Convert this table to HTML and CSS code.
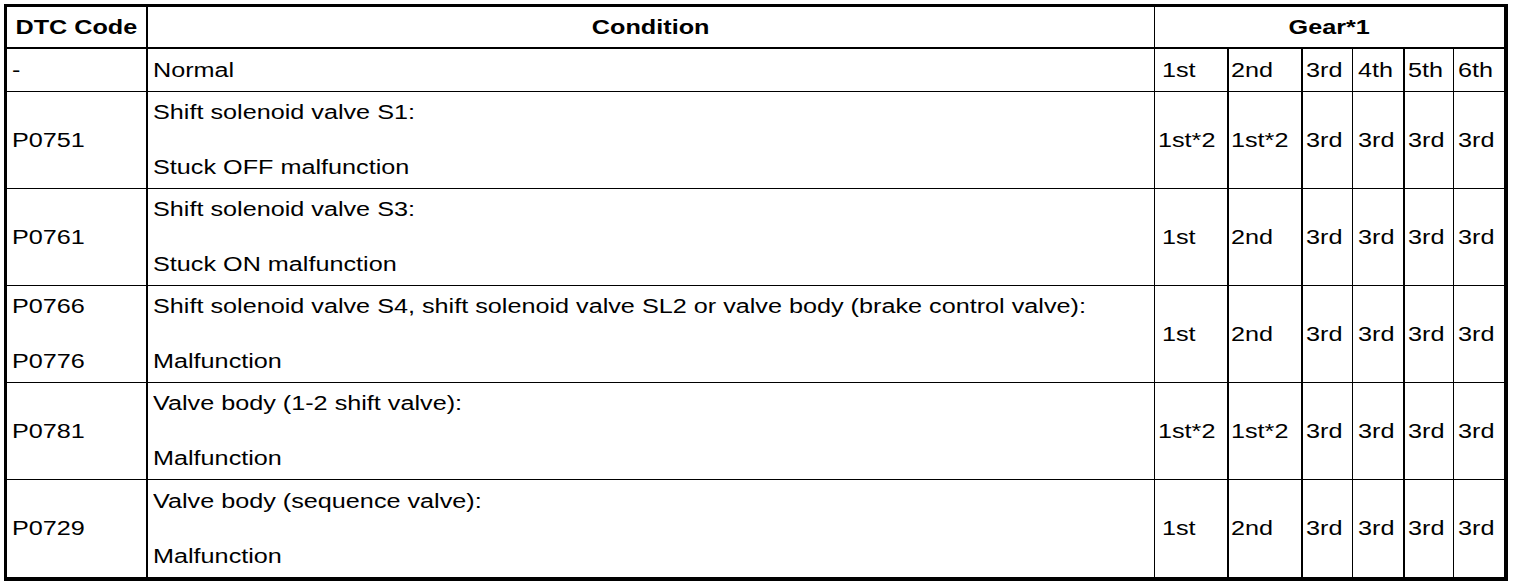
FILE: index.html
```html
<!DOCTYPE html>
<html>
<head>
<meta charset="utf-8">
<link rel="stylesheet" href="styles.css">
</head>
<body>
<table class="dtc">
  <colgroup>
    <col class="c-code">
    <col class="c-cond">
    <col class="c-g1">
    <col class="c-g2">
    <col class="c-g3">
    <col class="c-g4">
    <col class="c-g5">
    <col class="c-g6">
  </colgroup>
  <thead>
    <tr class="head">
      <th class="b2"><span class="t">DTC Code</span></th>
      <th class="b1"><span class="t">Condition</span></th>
      <th colspan="6" class="last"><span class="t">Gear*1</span></th>
    </tr>
  </thead>
  <tbody>
    <tr class="short">
      <td class="b2 code"><span class="t">-</span></td>
      <td class="b1 cond"><span class="t">Normal</span></td>
      <td class="b2 g1"><span class="t ind">1st</span></td>
      <td class="b2 g2"><span class="t">2nd</span></td>
      <td class="b1 g3"><span class="t">3rd</span></td>
      <td class="b2 g4"><span class="t">4th</span></td>
      <td class="b1 g5"><span class="t">5th</span></td>
      <td class="last g6"><span class="t">6th</span></td>
    </tr>
    <tr class="tall">
      <td class="b2 code"><span class="t">P0751</span></td>
      <td class="b1 cond"><div class="lines"><span class="t">Shift solenoid valve S1:</span><span class="t">Stuck OFF malfunction</span></div></td>
      <td class="b2 g1"><span class="t">1st*2</span></td>
      <td class="b2 g2"><span class="t">1st*2</span></td>
      <td class="b1 g3"><span class="t">3rd</span></td>
      <td class="b2 g4"><span class="t">3rd</span></td>
      <td class="b1 g5"><span class="t">3rd</span></td>
      <td class="last g6"><span class="t">3rd</span></td>
    </tr>
    <tr class="tall">
      <td class="b2 code"><span class="t">P0761</span></td>
      <td class="b1 cond"><div class="lines"><span class="t">Shift solenoid valve S3:</span><span class="t">Stuck ON malfunction</span></div></td>
      <td class="b2 g1"><span class="t ind">1st</span></td>
      <td class="b2 g2"><span class="t">2nd</span></td>
      <td class="b1 g3"><span class="t">3rd</span></td>
      <td class="b2 g4"><span class="t">3rd</span></td>
      <td class="b1 g5"><span class="t">3rd</span></td>
      <td class="last g6"><span class="t">3rd</span></td>
    </tr>
    <tr class="tall">
      <td class="b2 code"><div class="lines"><span class="t">P0766</span><span class="t">P0776</span></div></td>
      <td class="b1 cond"><div class="lines"><span class="t">Shift solenoid valve S4, shift solenoid valve SL2 or valve body (brake control valve):</span><span class="t">Malfunction</span></div></td>
      <td class="b2 g1"><span class="t ind">1st</span></td>
      <td class="b2 g2"><span class="t">2nd</span></td>
      <td class="b1 g3"><span class="t">3rd</span></td>
      <td class="b2 g4"><span class="t">3rd</span></td>
      <td class="b1 g5"><span class="t">3rd</span></td>
      <td class="last g6"><span class="t">3rd</span></td>
    </tr>
    <tr class="tall">
      <td class="b2 code"><span class="t">P0781</span></td>
      <td class="b1 cond"><div class="lines"><span class="t">Valve body (1-2 shift valve):</span><span class="t">Malfunction</span></div></td>
      <td class="b2 g1"><span class="t">1st*2</span></td>
      <td class="b2 g2"><span class="t">1st*2</span></td>
      <td class="b1 g3"><span class="t">3rd</span></td>
      <td class="b2 g4"><span class="t">3rd</span></td>
      <td class="b1 g5"><span class="t">3rd</span></td>
      <td class="last g6"><span class="t">3rd</span></td>
    </tr>
    <tr class="tall final">
      <td class="b2 code"><span class="t">P0729</span></td>
      <td class="b1 cond"><div class="lines"><span class="t">Valve body (sequence valve):</span><span class="t">Malfunction</span></div></td>
      <td class="b2 g1"><span class="t ind">1st</span></td>
      <td class="b2 g2"><span class="t">2nd</span></td>
      <td class="b1 g3"><span class="t">3rd</span></td>
      <td class="b2 g4"><span class="t">3rd</span></td>
      <td class="b1 g5"><span class="t">3rd</span></td>
      <td class="last g6"><span class="t">3rd</span></td>
    </tr>
  </tbody>
</table>
</body>
</html>
```

FILE: styles.css
```css
html, body {
  margin: 0;
  padding: 0;
  background: #ffffff;
}

body {
  padding: 4px 0 0 4px;
  font-family: "Liberation Sans", Arial, sans-serif;
  font-size: 20px;
  color: #000000;
}

.dtc {
  table-layout: fixed;
  border-collapse: separate;
  border-spacing: 0;
  width: 1504px;
  border-style: solid;
  border-color: #000;
  border-width: 3px 4px 4px 3px;
}

.c-code { width: 141px; }
.c-cond { width: 1007px; }
.c-g1 { width: 74px; }
.c-g2 { width: 74px; }
.c-g3 { width: 50px; }
.c-g4 { width: 52px; }
.c-g5 { width: 49px; }
.c-g6 { width: 50px; }

.dtc th,
.dtc td {
  box-sizing: border-box;
  padding: 0 0 0 5px;
  text-align: left;
  vertical-align: middle;
  white-space: nowrap;
  border-bottom: 1px solid #000;
  line-height: 23px;
}

.dtc th {
  font-weight: bold;
  text-align: center;
  padding: 0;
  border-bottom-width: 2px;
}

.dtc .b1 { border-right: 1px solid #000; }
.dtc .b2 { border-right: 2px solid #000; }

.dtc .final td { border-bottom: 0; }

.dtc .code { padding-left: 5px; }
.dtc .cond { padding-left: 5px; }
.dtc .g1 { padding-left: 3px; }
.dtc .g2 { padding-left: 2px; }
.dtc .g3 { padding-left: 3px; }
.dtc .g4 { padding-left: 5px; }
.dtc .g5 { padding-left: 3px; }
.dtc .g6 { padding-left: 4px; }

.head { height: 42px; }
.short { height: 43px; }
.tall { height: 97px; }

.t {
  display: inline-block;
  transform: scaleX(1.26);
  transform-origin: left center;
}

.t.ind { margin-left: 4px; }

.dtc th .t {
  transform-origin: center center;
}

.lines {
  display: flex;
  flex-direction: column;
  align-items: flex-start;
  gap: 32px;
}
```
